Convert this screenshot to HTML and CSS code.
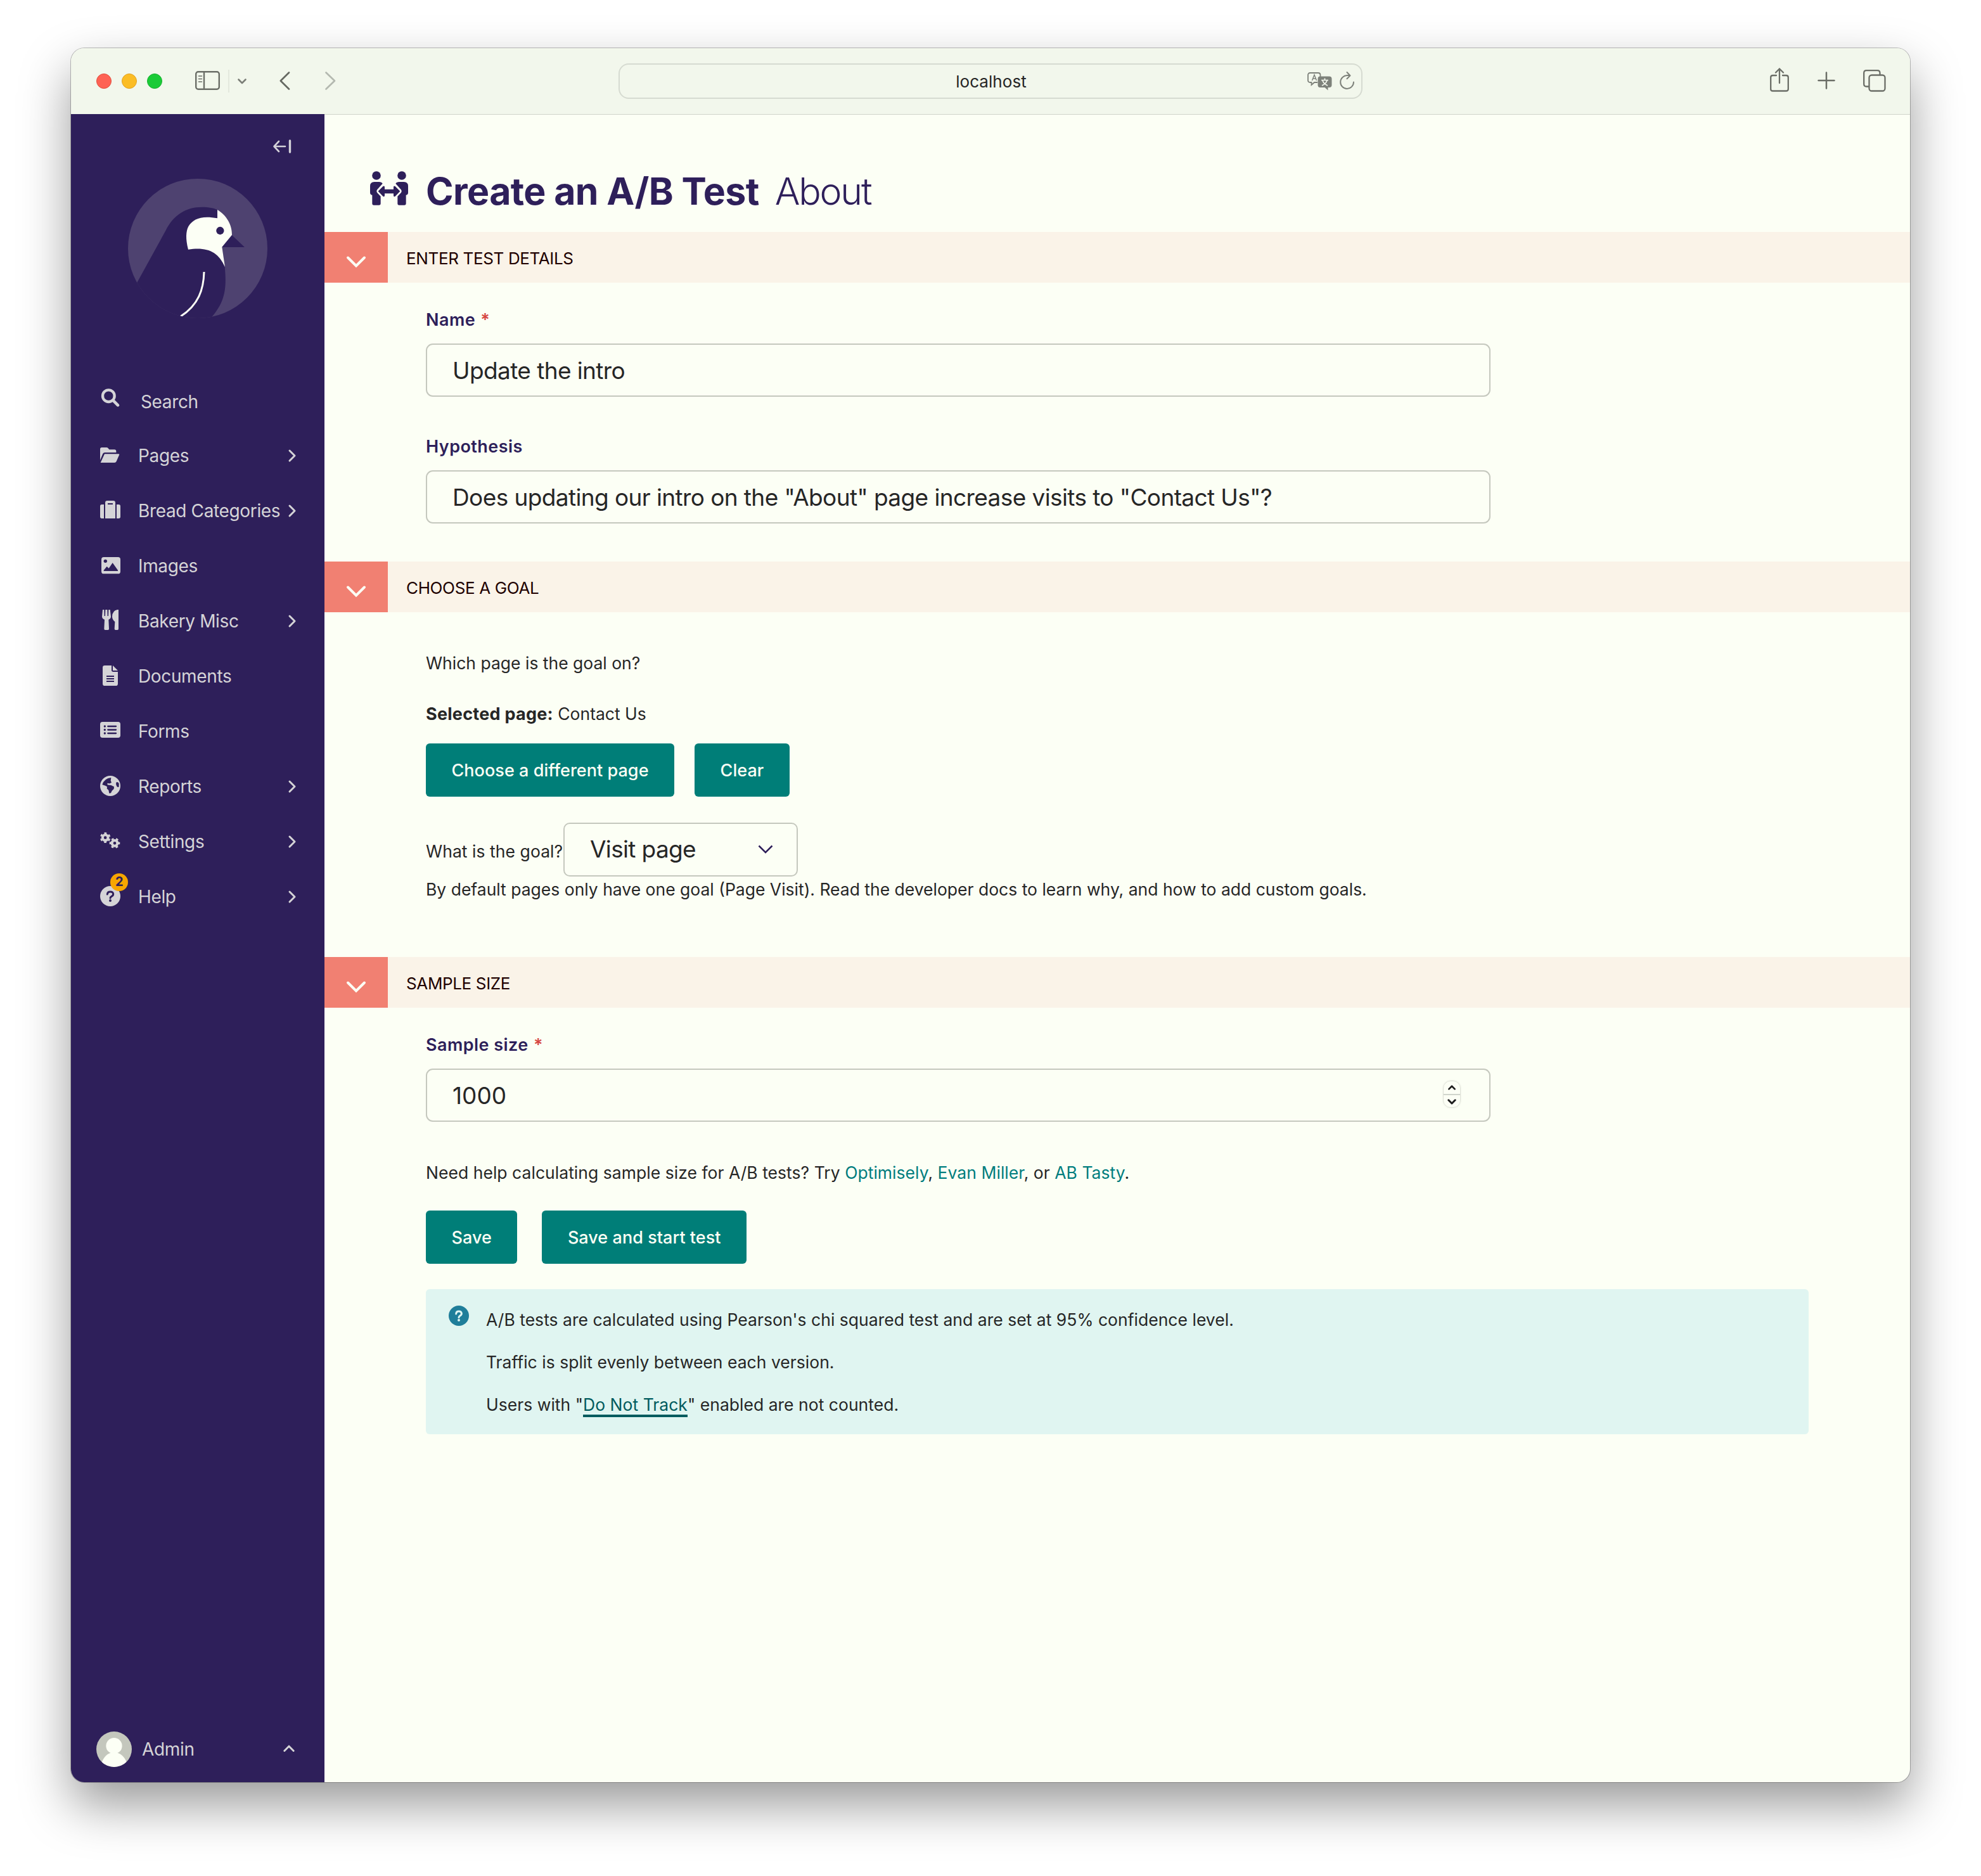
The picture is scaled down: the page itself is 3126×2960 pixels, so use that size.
FILE: index.html
```html
<!DOCTYPE html>
<html lang="en">
<head>
<meta charset="utf-8">
<title>Create an A/B Test</title>
<link rel="stylesheet" href="styles.css">
</head>
<body>
<div class="window">
  <header class="toolbar">
    <div class="toolbar-left">
      <span class="light light-red"></span><span class="light light-yellow"></span><span class="light light-green"></span>
      <svg class="tb-sidebar" width="39" height="30" viewBox="0 0 39 30" fill="none" stroke="#6b6e67" stroke-width="2.4"><rect x="1.2" y="1.2" width="36.6" height="27.6" rx="3.6"/><path d="M14 1v28"/><path d="M5.5 8h5M5.5 12.500h5M5.500 17h5" stroke-width="1.500" stroke-linecap="round"/></svg>
      <span class="tb-divider"></span>
      <svg class="tb-menu" width="14" height="9" viewBox="0 0 14 9" fill="none" stroke="#7c7f78" stroke-width="2.600" stroke-linecap="round" stroke-linejoin="round"><path d="M1.500 1.500L7 7l5.500-5.500"/></svg>
      <svg class="tb-back" width="17" height="29" viewBox="0 0 17 29" fill="none" stroke="#666962" stroke-width="2.700" stroke-linecap="round" stroke-linejoin="round"><path d="M15 1.500L1.800 14.500 15 27.500"/></svg>
      <svg class="tb-forward" width="17" height="29" viewBox="0 0 17 29" fill="none" stroke="#b4b9b0" stroke-width="2.700" stroke-linecap="round" stroke-linejoin="round"><path d="M1.500 1.500L15 14.500 1.500 27.500"/></svg>
    </div>
    <div class="address">
      <span class="address-text">localhost</span>
      <svg class="address-icons" width="76" height="30" viewBox="0 0 76 30">
        <path d="M5 2H17Q20.500 2 20.500 5.500V8M16 17H11L6.500 21V17H4.500Q1 17 1 13.500V5.500Q1 2 4.500 2H6" fill="none" stroke="#7d817a" stroke-width="1.800"/>
        <path d="M7.500 14L11 5l3.500 9M8.700 11h4.600" fill="none" stroke="#7d817a" stroke-width="1.500"/>
        <path d="M20 7.500h14.500q4 0 4 4V21q0 4-4 4h-2v4.500L27.500 25H20q-3.500 0-3.500-4v-9.500q0-4 3.500-4z" fill="#7d817a"/>
        <path d="M22 13.500h11M27.500 10.500v3M24 14q1.500 5 8 8M31 14q-1.500 5-8 8" fill="none" stroke="#f2f7ec" stroke-width="1.700"/>
        <path d="M73 16.500a10.400 10.400 0 1 1-10-10.400h4M62.500 1l5 5.200-5 5" fill="none" stroke="#7d817a" stroke-width="2" stroke-linecap="round" stroke-linejoin="round"/>
      </svg>
    </div>
    <div class="toolbar-right">
      <svg class="tb-share" width="30" height="38" viewBox="0 0 30 38" fill="none" stroke="#6b6e67" stroke-width="2.300" stroke-linecap="round" stroke-linejoin="round"><path d="M10 12H4.500Q1.200 12 1.200 15V33.500Q1.200 36.500 4.500 36.500H25.500Q28.800 36.500 28.800 33.500V15Q28.800 12 25.500 12H20M15 24V1.500M9 7.500L15 1.500l6 6"/></svg>
      <svg class="tb-plus" width="28" height="28" viewBox="0 0 28 28" fill="none" stroke="#6b6e67" stroke-width="2.500" stroke-linecap="round"><path d="M14 1.500v25M1.500 14h25"/></svg>
      <svg class="tb-tabs" width="36" height="35" viewBox="0 0 36 35" fill="none" stroke="#6b6e67" stroke-width="2.300"><rect x="9.500" y="8.500" width="25" height="25" rx="4"/><path d="M9.500 26.500H5.200Q1.200 26.500 1.200 22.500V5.200Q1.200 1.200 5.200 1.200H22.500Q26.500 1.200 26.500 5.200V8.500"/></svg>
    </div>
  </header>

  <div class="page">
    <aside class="sidebar">
      <div class="collapse">
        <svg width="29" height="22" viewBox="0 0 29 22" fill="none" stroke="#d3d1d8" stroke-linecap="round" stroke-linejoin="round"><path d="M19 11H2M9 3L1.500 11 9 19" stroke-width="2.600"/><path d="M26.500 2v18" stroke-width="3.400"/></svg>
      </div>
      <svg class="logo" width="220" height="220" viewBox="306 666 660 660">
        <defs><clipPath id="disc"><circle cx="636" cy="996" r="330"/></clipPath></defs>
        <circle cx="636" cy="996" r="330" fill="#4e4270"/>
        <g clip-path="url(#disc)">
          <path d="M349 1157L484 912C520 838 580 800 656 800C690 800 712 805 730 813L797 932L858 990H751L764 1083C773 1180 768 1245 703 1320L640 1400H300L280 1200Z" fill="#2e1f5a"/>
          <path d="M555 1318C640 1262 664 1190 666 1107" fill="none" stroke="#fcfff5" stroke-width="9"/>
        </g>
        <path d="M729 813C768 836 799 880 798 932L751 989L765 1084C733 1010 680 988 591 1001C578 950 580 915 592 892C614 855 655 839 729 853Z" fill="#fcfff5"/>
        <circle cx="742" cy="912" r="18.500" fill="#2e1f5a"/>
      </svg>

      <nav class="nav">
        <a class="nav-item nav-search">
          <svg class="nav-icon" viewBox="174 98 96 96"><circle cx="214" cy="136" r="28" fill="none" stroke="#d5d4d7" stroke-width="13"/><path d="M235 157l23 23" stroke="#d5d4d7" stroke-width="14" stroke-linecap="round"/></svg>
          <span class="nav-label">Search</span>
        </a>
        <a class="nav-item">
          <svg class="nav-icon" viewBox="174 369 96 96" fill="#d5d4d7"><path d="M174 438V386q0-8 8-8h22q5 0 8 4l5 6h25q8 0 8 8v6H196q-6 0-9 5z"/><path d="M195 409h66q6 0 3 5l-13 30q-3 6-9 6h-66z"/></svg>
          <span class="nav-label">Pages</span>
          <svg class="nav-chevron" viewBox="0 0 12 20"><path d="M2 2l8 8-8 8"/></svg>
        </a>
        <a class="nav-item">
          <svg class="nav-icon" viewBox="174 630 96 96" fill="#d5d4d7"><path d="M182 648h10v66h-10q-8 0-8-8v-50q0-8 8-8zM252 648h10q8 0 8 8v50q0 8-8 8h-10z"/><path fill-rule="evenodd" d="M198 714V640q0-10 10-10h28q10 0 10 10v74zM210 642v6h24v-6z"/></svg>
          <span class="nav-label">Bread Categories</span>
          <svg class="nav-chevron" viewBox="0 0 12 20"><path d="M2 2l8 8-8 8"/></svg>
        </a>
        <a class="nav-item">
          <svg class="nav-icon" viewBox="174 891 96 96"><rect x="180" y="897" width="90" height="79" rx="11" fill="#d5d4d7"/><circle cx="199" cy="916" r="8" fill="#2e1f5a"/><path d="M191 963v-4l15-18 9 9 18-26 25 35v4z" fill="#2e1f5a"/></svg>
          <span class="nav-label">Images</span>
        </a>
        <a class="nav-item">
          <svg class="nav-icon" viewBox="174 1152 96 96" fill="#d5d4d7"><path d="M186 1146h7l1 30h4l1-30h9l1 30h4l1-30h7l4 32q0 10-11 15l2 44q0 5-5 5h-13q-5 0-5-5l2-44q-12-5-12-15zM261 1146v91q0 5-5 5h-9q-5 0-5-5l2-34q-13-10-13-25 1-27 24-32z"/></svg>
          <span class="nav-label">Bakery Misc</span>
          <svg class="nav-chevron" viewBox="0 0 12 20"><path d="M2 2l8 8-8 8"/></svg>
        </a>
        <a class="nav-item">
          <svg class="nav-icon" viewBox="174 93 96 96"><path d="M196 90h32v22q0 8 8 8h22v56q0 10-10 10h-52q-10 0-10-10v-76q0-10 10-10zM234 90l24 24h-24z" fill="#d5d4d7"/><path d="M204 141h36M204 153h36M204 165h36" stroke="#2e1f5a" stroke-width="6"/></svg>
          <span class="nav-label">Documents</span>
        </a>
        <a class="nav-item">
          <svg class="nav-icon" viewBox="174 354 96 96"><rect x="174" y="357" width="96" height="75" rx="11" fill="#d5d4d7"/><path d="M211 378h38M211 394.500h38M211 411h38" stroke="#2e1f5a" stroke-width="7" stroke-linecap="round"/><g fill="#2e1f5a"><circle cx="196" cy="378" r="5"/><circle cx="196" cy="394.500" r="5"/><circle cx="196" cy="411" r="5"/></g></svg>
          <span class="nav-label">Forms</span>
        </a>
        <a class="nav-item">
          <svg class="nav-icon" viewBox="174 615 96 96"><circle cx="222" cy="660" r="48" fill="#d5d4d7"/><path d="M184 654Q194 624 226 621l-2 14 4 9-9 5-11-2 1 8 17 2 14 7-1 10-9 9-5 11-8 1-3-15-8-7 1-9-8-5zM251 643q8-3 12 6l0 16-8 0q-9-12-4-22z" fill="#2e1f5a"/></svg>
          <span class="nav-label">Reports</span>
          <svg class="nav-chevron" viewBox="0 0 12 20"><path d="M2 2l8 8-8 8"/></svg>
        </a>
        <a class="nav-item">
          <svg class="nav-icon" viewBox="174 876 96 96"><g fill="none" stroke="#d5d4d7"><circle cx="198.500" cy="905" r="13" stroke-width="12"/><circle cx="198.500" cy="905" r="21" stroke-width="8" stroke-dasharray="11 11" stroke-dashoffset="-5.500"/><circle cx="243" cy="931" r="13" stroke-width="12"/><circle cx="243" cy="931" r="21" stroke-width="8" stroke-dasharray="11 11" stroke-dashoffset="5.500"/></g></svg>
          <span class="nav-label">Settings</span>
          <svg class="nav-chevron" viewBox="0 0 12 20"><path d="M2 2l8 8-8 8"/></svg>
        </a>
        <a class="nav-item nav-help">
          <svg class="nav-icon" viewBox="174 1137 96 96"><circle cx="222" cy="1182" r="48" fill="#d5d4d7"/><path d="M208 1173q1-12 14-12t14 11q0 7-8 11-6 3-6 8" fill="none" stroke="#2e1f5a" stroke-width="9" stroke-linecap="round"/><circle cx="222" cy="1203" r="6" fill="#2e1f5a"/></svg>
          <span class="badge">2</span>
          <span class="nav-label">Help</span>
          <svg class="nav-chevron" viewBox="0 0 12 20"><path d="M2 2l8 8-8 8"/></svg>
        </a>
      </nav>

      <div class="account">
        <svg width="56" height="56" viewBox="156 156 168 168"><defs><clipPath id="avatar"><circle cx="240" cy="240" r="84"/></clipPath></defs><circle cx="240" cy="240" r="84" fill="#c4c7bd"/><g clip-path="url(#avatar)" fill="#fcfff5"><circle cx="240" cy="224" r="38"/><path d="M182 302C192 275 208 262 224 257H256C272 262 290 275 299 302L270 340H210Z"/></g></svg>
        <span class="account-name">Admin</span>
        <svg class="account-chevron" viewBox="0 0 18 11"><path d="M1.800 9.500L9 2.200l7.200 7.300"/></svg>
      </div>
    </aside>

    <main class="content">
      <div class="title-row">
        <svg width="60" height="54" viewBox="42 63 180 162" fill="#2e1f5a">
          <circle cx="72" cy="84" r="20.500"/><path d="M62 114H84Q97 114 101 122L76 150Q70 158 76 166L92 182V216Q92 224 84 224H60Q52 224 52 216V176Q42 175 42 164V134Q42 114 62 114Z"/>
          <circle cx="192" cy="84" r="20.500"/><path d="M202 114H180Q167 114 163 122L188 150Q194 158 188 166L172 182V216Q172 224 180 224H204Q212 224 212 216V176Q222 175 222 164V134Q222 114 202 114Z"/>
          <path d="M80 158.500L103 135Q111 130 111 139V149H153V139Q153 130 161 135L184 158.500L161 182Q153 187 153 178V169H111V178Q111 187 103 182Z"/>
        </svg>
        <h1 class="title">Create an A/B Test</h1>
        <span class="subtitle">About</span>
      </div>

      <section>
        <div class="section-bar"><span class="section-toggle"><svg viewBox="0 0 30 18"><path d="M2 2.500l13 13 13-13"/></svg></span><h2>Enter test details</h2></div>
        <div class="section-body details">
          <label class="label">Name <span class="required">*</span></label>
          <div class="input">Update the intro</div>
          <label class="label label-next">Hypothesis</label>
          <div class="input">Does updating our intro on the "About" page increase visits to "Contact Us"?</div>
        </div>
      </section>

      <section>
        <div class="section-bar"><span class="section-toggle"><svg viewBox="0 0 30 18"><path d="M2 2.500l13 13 13-13"/></svg></span><h2>Choose a goal</h2></div>
        <div class="section-body goal">
          <p>Which page is the goal on?</p>
          <p class="selected"><strong>Selected page:</strong> Contact Us</p>
          <div class="buttons page-buttons"><button>Choose a different page</button><button>Clear</button></div>
          <div class="goal-row"><span class="goal-label">What is the goal?</span><div class="select"><span>Visit page</span><svg width="24" height="14" viewBox="0 0 24 14" fill="none" stroke="#2e1f5a" stroke-width="2.500"><path d="M1.500 1.500L12 12 22.500 1.500"/></svg></div></div>
          <p>By default pages only have one goal (Page Visit). Read the developer docs to learn why, and how to add custom goals.</p>
        </div>
      </section>

      <section>
        <div class="section-bar"><span class="section-toggle"><svg viewBox="0 0 30 18"><path d="M2 2.500l13 13 13-13"/></svg></span><h2>Sample size</h2></div>
        <div class="section-body details">
          <label class="label label-size">Sample size <span class="required">*</span></label>
          <div class="input number"><span>1000</span>
            <span class="stepper"><svg viewBox="0 0 14 9"><path d="M1.800 7.200L7 2l5.200 5.200"/></svg><svg viewBox="0 0 14 9"><path d="M1.800 1.800L7 7l5.200-5.200"/></svg></span>
          </div>
          <p class="calc">Need help calculating sample size for A/B tests? Try <a>Optimisely</a>, <a>Evan Miller</a>, or <a>AB Tasty</a>.</p>
          <div class="buttons save-buttons"><button>Save</button><button>Save and start test</button></div>
          <div class="help">
            <svg width="32" height="32" viewBox="0 0 32 32"><circle cx="16" cy="16" r="16" fill="#1f7e9a"/><path d="M11.700 13q.3-4 4.300-4t4.400 3.500q0 2.300-2.700 3.700-1.700 1-1.700 2.600" fill="none" stroke="#e0f5f2" stroke-width="3" stroke-linecap="round"/><circle cx="16" cy="23" r="2" fill="#e0f5f2"/></svg>
            <div class="help-text">
              <p>A/B tests are calculated using Pearson's chi squared test and are set at 95% confidence level.</p>
              <p>Traffic is split evenly between each version.</p>
              <p>Users with "<a class="track">Do Not Track</a>" enabled are not counted.</p>
            </div>
          </div>
        </div>
      </section>
    </main>
  </div>
</div>
</body>
</html>
```
FILE: styles.css
```css
* { box-sizing: border-box; }

body {
  margin: 0;
  padding: 76px 112px 148px;
  height: 2960px;
  background: #fff;
  color: #262626;
  font-family: "Inter", "Liberation Sans", sans-serif;
  font-size: 26.5px;
  line-height: 40px;
  overflow: hidden;
}

svg { display: block; flex: none; overflow: visible; }
p, h1, h2 { margin: 0; }

.window {
  display: flex;
  flex-direction: column;
  height: 2736px;
  border-radius: 21px;
  overflow: hidden;
  background: #fcfff5;
  box-shadow: 0 0 0 1px rgba(0, 0, 0, .25), 0 36px 80px rgba(0, 0, 0, .4);
}

/* Browser toolbar */
.toolbar {
  flex: none;
  display: grid;
  grid-template-columns: 864px 1174px 1fr;
  align-items: center;
  height: 104px;
  background: #f2f7ec;
}
.toolbar-left { display: flex; align-items: center; padding-left: 40px; }
.light { width: 24px; height: 24px; margin-right: 16px; border-radius: 50%; }
.light-red { background: #fe6254; border: 1px solid #e2503f; }
.light-yellow { background: #fbbd25; border: 1px solid #e2a223; }
.light-green { background: #1acb37; border: 1px solid #19b030; }
.tb-sidebar { margin: 0 13px 2px 36px; }
.tb-divider { width: 2px; height: 36px; background: #e3e8dd; }
.tb-menu { margin-left: 13px; }
.tb-back { margin: 0 55px 2px 52px; }
.tb-forward { margin-bottom: 2px; }
.address {
  display: grid;
  grid-template-columns: 1fr auto 1fr;
  align-items: center;
  height: 56px;
  border: 2px solid #d6dbd1;
  border-radius: 16px;
}
.address-text { grid-column: 2; padding: 2px 0 0 2px; font-size: 26px; letter-spacing: .05px; }
.address-icons { justify-self: end; margin-right: 9px; }
.toolbar-right { display: flex; align-items: center; padding-left: 643px; }
.tb-share { margin-bottom: 4px; }
.tb-plus { margin: 0 44px 2px 45px; }
.tb-tabs { margin-bottom: 1px; }

.page { flex: 1; display: flex; min-height: 0; }

/* Sidebar */
.sidebar {
  flex: none;
  display: flex;
  flex-direction: column;
  width: 400px;
  background: #2e1f5a;
  color: #d5d4d7;
}
.collapse { display: flex; justify-content: flex-end; padding: 40px 52px 0 0; }
.logo { margin: 40px 0 0 90px; }
.nav { display: flex; flex-direction: column; padding-top: 88px; }
.nav-item {
  position: relative;
  display: flex;
  align-items: center;
  height: 87px;
  padding: 0 45px 0 46px;
  font-size: 28px;
  letter-spacing: -.36px;
}
.nav-search { height: 85px; }
.nav-search .nav-icon { margin-top: -9px; }
.nav-search .nav-label { padding: 2px 0 0 32px; }
.nav-icon { width: 32px; height: 32px; }
.nav-label { padding-left: 28px; }
.nav-chevron { width: 12px; height: 20px; margin-left: auto; }
.nav-chevron path, .account-chevron path {
  fill: none;
  stroke: #d5d4d7;
  stroke-width: 3;
  stroke-linecap: round;
  stroke-linejoin: round;
}
.badge {
  position: absolute;
  left: 62px;
  top: 7px;
  width: 28px;
  height: 28px;
  border-radius: 50%;
  background: #f7a600;
  color: #2e1f5a;
  font-size: 20px;
  font-weight: 700;
  line-height: 27px;
  text-align: center;
}
.account {
  display: flex;
  align-items: center;
  margin-top: auto;
  padding: 0 47px 24px 40px;
  font-size: 28px;
}
.account-name { padding-left: 16px; letter-spacing: -.3px; }
.account-chevron { width: 18px; height: 11px; margin: 0 0 3px auto; }

/* Main column */
.content { flex: 1; min-width: 0; border-top: 1px solid #d0d5cb; }
.title-row {
  display: flex;
  align-items: center;
  height: 185px;
  padding: 0 0 0 72px;
  color: #2e1f5a;
  font-size: 59px;
  line-height: 72px;
}
.title-row svg { margin-top: 47px; }
.title { margin: 56px 0 0 28px; font-size: 59px; font-weight: 700; letter-spacing: -.6px; }
.subtitle { margin: 56px 0 0 25px; font-weight: 350; letter-spacing: -2.2px; }

.section-bar { display: flex; height: 80px; background: #faf3e8; }
.section-toggle {
  display: flex;
  align-items: center;
  justify-content: center;
  width: 100px;
  padding-top: 13px;
  background: #f18072;
}
.section-toggle svg { width: 30px; height: 18px; }
.section-toggle path { fill: none; stroke: #fcfff5; stroke-width: 4; stroke-linecap: round; }
.section-bar h2 {
  padding: 2px 0 0 29px;
  color: #200000;
  font-size: 26px;
  font-weight: 400;
  letter-spacing: -.36px;
  line-height: 80px;
  text-transform: uppercase;
}
.section-body { padding: 39px 160px 60px; }
.goal { padding-top: 60px; padding-bottom: 87px; }

.label {
  display: block;
  margin-bottom: 17px;
  color: #2e1f5a;
  font-size: 27px;
  font-weight: 600;
  letter-spacing: .45px;
}
.label-next { margin-top: 59px; }
.required { padding-left: 1px; color: #d64541; font-weight: 600; }
.input {
  display: flex;
  align-items: center;
  width: 1680px;
  height: 84px;
  padding: 1px 0 0 40px;
  border: 2px solid #c5c8be;
  border-radius: 11px;
  font-size: 37px;
  letter-spacing: -.6px;
}
.number { justify-content: space-between; padding-right: 45px; letter-spacing: 0; }
.stepper {
  display: flex;
  flex-direction: column;
  width: 28px;
  height: 43px;
  margin-top: -4px;
  border: 1px solid #dfe2d8;
  border-radius: 12px;
  box-shadow: 0 0 3px rgba(0, 0, 0, .08);
}
.stepper svg { width: 14px; height: 9px; margin: 6px auto; }
.stepper svg:first-child { margin: 0; padding: 6px 6px 6px; width: 26px; height: 22px; border-bottom: 2px solid #d0d5cc; }
.stepper path { fill: none; stroke: #1c1c1c; stroke-width: 3; stroke-linecap: round; stroke-linejoin: round; }

.selected { margin-top: 40px; }
.selected strong { font-size: 27px; letter-spacing: .25px; line-height: 1; }
.buttons { display: flex; }
button {
  height: 84px;
  padding: 0 40.5px;
  border: 0;
  border-radius: 6px;
  background: #007e78;
  color: #fcfff5;
  font: 500 27px "Inter", "Liberation Sans", sans-serif;
  letter-spacing: .04px;
}
.page-buttons { gap: 32px; margin-top: 27px; }
.save-buttons { gap: 39px; margin-top: 39px; }

.goal-row { display: flex; margin-top: 41px; }
.goal-label { width: 217px; padding-top: 25px; letter-spacing: .06px; white-space: nowrap; }
.select {
  display: flex;
  align-items: center;
  justify-content: space-between;
  width: 370px;
  height: 85px;
  padding: 0 37px 2px 40px;
  border: 2px solid #c5c8be;
  border-radius: 10px;
  font-size: 37px;
  letter-spacing: -.66px;
}

.calc { margin-top: 60px; letter-spacing: .035px; }
.calc a { color: #007d7e; }
.help {
  display: flex;
  width: 2182px;
  margin-top: 40px;
  padding: 28px 36px 27px;
  border-radius: 6px;
  background: #e0f5f1;
}
.save-buttons { margin-top: 40px; }
.help > svg { margin-top: -2px; }
.help-text { display: grid; gap: 27px; padding-left: 27px; letter-spacing: .02px; }
.track { border-bottom: 4px solid #005b5e; color: #005b5e; }
```
